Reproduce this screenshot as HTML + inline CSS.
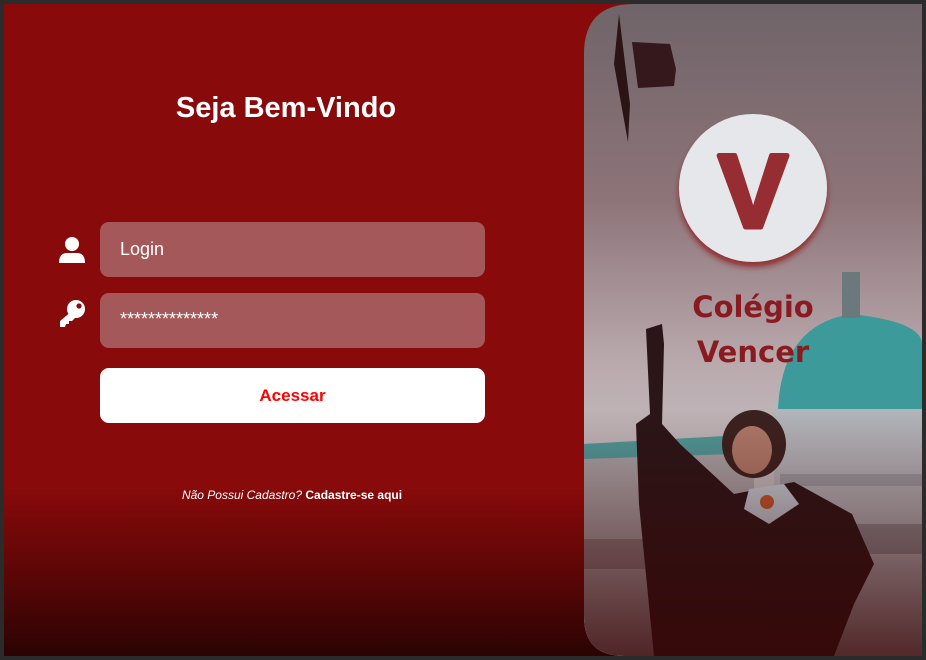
<!DOCTYPE html>
<html><head><meta charset="utf-8"><style>
html,body{margin:0;padding:0;}
body{width:926px;height:660px;background:#2b2b2b;position:relative;overflow:hidden;font-family:"Liberation Sans",sans-serif;}
#left{position:absolute;left:4px;top:4px;width:640px;height:652px;background:linear-gradient(to bottom,#890a0a 0%,#890a0a 74%,#5a0606 88%,#2a0303 100%);}
h1{position:absolute;left:0;width:572px;top:92px;margin:0;text-align:center;color:#fff;font-size:29px;font-weight:bold;letter-spacing:0px;}
.inp{position:absolute;left:100px;width:385px;height:55px;border-radius:9px;background:#a45859;color:#fff;font-size:18px;box-sizing:border-box;padding-left:20px;line-height:55px;}
.btn{position:absolute;left:100px;top:368px;width:385px;height:55px;border-radius:9px;background:#fff;color:#ff0000;font-weight:bold;font-size:17px;text-align:center;line-height:55px;}
.reg{position:absolute;left:0;width:584px;top:488px;text-align:center;color:#fff;font-size:12px;}
#right{position:absolute;left:584px;top:4px;}
</style></head><body>
<div id="left"></div>
<h1>Seja Bem-Vindo</h1>
<svg style="position:absolute;left:58px;top:236px" width="28" height="28" viewBox="0 0 28 28"><circle cx="14" cy="8" r="7" fill="#fff"/><path d="M1 27 Q1 17 9 17 L19 17 Q27 17 27 27 Z" fill="#fff"/></svg>
<svg style="position:absolute;left:58px;top:299px" width="28" height="28" viewBox="0 0 28 28"><circle cx="18" cy="10" r="9" fill="#fff"/><circle cx="21" cy="7" r="2.6" fill="#890a0a"/><path d="M14 12 L2 22 L2 28 L7 28 L8 25 L11 25 L11 22 L14 22 L18 18 Z" fill="#fff"/></svg>
<div class="inp" style="top:222px">Login</div>
<div class="inp" style="top:293px;line-height:52px">**************</div>
<div class="btn">Acessar</div>
<div class="reg"><i>Não Possui Cadastro?</i> <b>Cadastre-se aqui</b></div>
<svg id="right" width="338" height="652" viewBox="0 0 338 652">
<defs>
<clipPath id="c"><path d="M50 0 H338 V652 H40 Q0 652 0 612 V50 Q0 0 50 0 Z"/></clipPath>
<linearGradient id="sky" x1="0" y1="0" x2="0" y2="1"><stop offset="0" stop-color="#6f6469"/><stop offset="0.3" stop-color="#8d7479"/><stop offset="0.55" stop-color="#b9a9ad"/><stop offset="0.75" stop-color="#c7c3c6"/></linearGradient>
<linearGradient id="fade" x1="0" y1="0" x2="0" y2="1"><stop offset="0.62" stop-color="#3a0505" stop-opacity="0"/><stop offset="1" stop-color="#3a0505" stop-opacity="0.8"/></linearGradient>
<filter id="sh"><feDropShadow dx="0" dy="5" stdDeviation="3" flood-color="#8a1a1f" flood-opacity="0.8"/></filter>
</defs>
<g clip-path="url(#c)">
<rect width="338" height="652" fill="url(#sky)"/>
<rect x="0" y="445" width="170" height="207" fill="#a9a5a9"/>
<path d="M0 440 L140 432 L150 450 L0 455 Z" fill="#4f9a9a"/>
<rect x="0" y="535" width="170" height="30" fill="#8e8185"/>
<rect x="190" y="395" width="148" height="257" fill="#b3b6bb"/>
<path d="M194 405 Q198 320 268 310 Q338 318 338 340 V405 Z" fill="#3c9a9a"/>
<rect x="258" y="268" width="18" height="46" fill="#6b787c"/>
<rect x="196" y="470" width="142" height="12" fill="#9a9ea4"/>
<rect x="196" y="520" width="142" height="30" fill="#8c8e94"/>
<path d="M35 10 L46 100 L44 138 L30 60 Z" fill="#2a1416"/>
<path d="M48 38 L86 40 L92 65 L90 82 L54 84 Z" fill="#34181c"/>
<path d="M62 325 L78 320 L80 340 L78 420 L96 440 L150 490 L210 478 L268 510 L290 560 L270 600 L250 652 L70 652 L55 500 L52 420 L66 410 Z" fill="#2a1618"/>
<ellipse cx="170" cy="440" rx="32" ry="34" fill="#3a2220"/>
<ellipse cx="168" cy="446" rx="20" ry="24" fill="#b07a6a"/>
<path d="M165 485 L200 480 L215 500 L185 520 L160 505 Z" fill="#c6d2dc"/>
<circle cx="183" cy="498" r="7" fill="#c65a30"/>
<rect x="0" y="0" width="338" height="652" fill="url(#fade)"/>
</g>
<circle cx="169" cy="184" r="74" fill="#e6e7ea" filter="url(#sh)"/>
<text x="169" y="223" text-anchor="middle" font-family="Liberation Sans,sans-serif" font-weight="bold" font-size="104" fill="#962d33" stroke="#962d33" stroke-width="5" stroke-linejoin="round">V</text>
<text x="169" y="313" text-anchor="middle" font-family="DejaVu Sans,sans-serif" font-weight="bold" font-size="29" fill="#8a1a1f">Colégio</text>
<text x="169" y="358" text-anchor="middle" font-family="DejaVu Sans,sans-serif" font-weight="bold" font-size="29" fill="#8a1a1f">Vencer</text>
</svg>
</body></html>
